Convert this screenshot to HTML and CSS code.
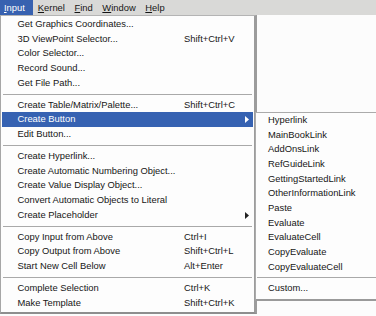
FILE: index.html
```html
<!DOCTYPE html>
<html>
<head>
<meta charset="utf-8">
<link rel="stylesheet" href="styles.css">
</head>
<body>
<div class="menubar">
  <div class="mb-item mb-active"><u>I</u>nput</div>
  <div class="mb-item"><u>K</u>ernel</div>
  <div class="mb-item"><u>F</u>ind</div>
  <div class="mb-item"><u>W</u>indow</div>
  <div class="mb-item"><u>H</u>elp</div>
</div>
<div class="page"></div>

<div class="menu main-menu">
  <div class="row"><span class="label">Get Graphics Coordinates...</span></div>
  <div class="row"><span class="label">3D ViewPoint Selector...</span><span class="key">Shift+Ctrl+V</span></div>
  <div class="row"><span class="label">Color Selector...</span></div>
  <div class="row"><span class="label">Record Sound...</span></div>
  <div class="row"><span class="label">Get File Path...</span></div>
  <div class="sep"></div>
  <div class="row"><span class="label">Create Table/Matrix/Palette...</span><span class="key">Shift+Ctrl+C</span></div>
  <div class="row row-active"><span class="label">Create Button</span><svg class="arrow" width="4" height="7" viewBox="0 0 4 7"><path d="M0 0L4 3.5L0 7Z" fill="#ffffff"/></svg></div>
  <div class="row"><span class="label">Edit Button...</span></div>
  <div class="sep"></div>
  <div class="row"><span class="label">Create Hyperlink...</span></div>
  <div class="row"><span class="label">Create Automatic Numbering Object...</span></div>
  <div class="row"><span class="label">Create Value Display Object...</span></div>
  <div class="row"><span class="label">Convert Automatic Objects to Literal</span></div>
  <div class="row"><span class="label">Create Placeholder</span><svg class="arrow" width="4" height="7" viewBox="0 0 4 7"><path d="M0 0L4 3.5L0 7Z" fill="#222222"/></svg></div>
  <div class="sep"></div>
  <div class="row"><span class="label">Copy Input from Above</span><span class="key">Ctrl+I</span></div>
  <div class="row"><span class="label">Copy Output from Above</span><span class="key">Shift+Ctrl+L</span></div>
  <div class="row"><span class="label">Start New Cell Below</span><span class="key">Alt+Enter</span></div>
  <div class="sep"></div>
  <div class="row"><span class="label">Complete Selection</span><span class="key">Ctrl+K</span></div>
  <div class="row"><span class="label">Make Template</span><span class="key">Shift+Ctrl+K</span></div>
</div>

<div class="menu sub-menu">
  <div class="srow">Hyperlink</div>
  <div class="srow">MainBookLink</div>
  <div class="srow">AddOnsLink</div>
  <div class="srow">RefGuideLink</div>
  <div class="srow">GettingStartedLink</div>
  <div class="srow">OtherInformationLink</div>
  <div class="srow">Paste</div>
  <div class="srow">Evaluate</div>
  <div class="srow">EvaluateCell</div>
  <div class="srow">CopyEvaluate</div>
  <div class="srow">CopyEvaluateCell</div>
  <div class="ssep"></div>
  <div class="srow">Custom...</div>
</div>
</body>
</html>
```

FILE: styles.css
```css
html, body {
  margin: 0;
  padding: 0;
}
body {
  width: 376px;
  height: 316px;
  overflow: hidden;
  position: relative;
  background: #fcfcfc;
  font-family: "Liberation Sans", Arial, sans-serif;
  font-size: 9.4px;
  color: #161616;
}
.menubar {
  display: flex;
  height: 15px;
  background: #d9d9d7;
  line-height: 15px;
}
.mb-item {
  padding: 0 4.8px;
}
.mb-active {
  width: 33px;
  box-sizing: border-box;
  padding-left: 4px;
  background: #3761b0;
  color: #ffffff;
}
.mb-item u {
  text-decoration-thickness: 1px;
  text-underline-offset: 1px;
}
.page {
  height: 301px;
  background: #fcfcfc;
}
.menu {
  position: absolute;
  background: #fdfdfd;
  box-sizing: border-box;
}
.main-menu {
  left: 0;
  top: 15px;
  width: 257px;
  border-top: 1px solid #b4b4b4;
  border-left: 1px solid #a6a6a6;
  border-right: 3px solid #9c9c9c;
  border-bottom: 2px solid #8e8e8e;
  padding: 1px 0 1px 0;
}
.row {
  display: flex;
  align-items: center;
  height: 14.7px;
  line-height: 14.7px;
  padding: 0 5px 0 16.5px;
  white-space: nowrap;
}
.label {
  width: 166.5px;
  flex: none;
}
.key {
  flex: none;
}
.arrow {
  margin-left: auto;
  display: block;
}
.row-active {
  background: #3662b2;
  color: #ffffff;
  margin: 0 1px;
  padding-left: 15.5px;
  padding-right: 4px;
}
.sep {
  height: 1px;
  background: #a9a9a9;
  margin: 3.15px 2px;
}
.sub-menu {
  left: 255px;
  top: 112px;
  width: 130px;
  border: 1px solid #ababab;
  border-right: none;
  border-bottom: 2px solid #9a9a9a;
  padding: 0 0 4px 0;
}
.srow {
  height: 14.67px;
  line-height: 14.67px;
  padding-left: 12px;
  white-space: nowrap;
}
.ssep {
  height: 1px;
  background: #a9a9a9;
  margin: 2.7px 0 2.7px 1px;
}
```
